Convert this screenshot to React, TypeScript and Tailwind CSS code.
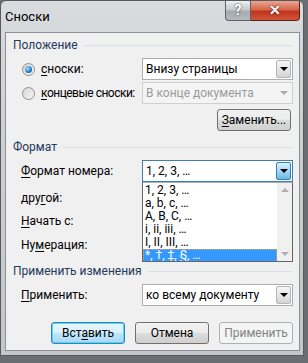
import React from 'react'

const font = { fontFamily: 'Roboto, "Noto Sans", sans-serif' }

function U({ children }: { children: React.ReactNode }) {
  return <span className="underline underline-offset-2">{children}</span>
}

function Arrow({ disabled, active }: { disabled?: boolean; active?: boolean }) {
  if (disabled) {
    return (
      <div className="flex h-full w-[16px] items-center justify-center">
        <div className="h-0 w-0 border-x-[4px] border-t-[4px] border-x-transparent border-t-[#a8a8a8]" />
      </div>
    )
  }
  return (
    <div
      className={
        'm-[1px] flex w-[15px] items-center justify-center rounded-[2px] border ' +
        (active
          ? 'border-[#3c7fb1] bg-[linear-gradient(#d9effb,#a4d7f4_50%,#6cb8e4)]'
          : 'border-[#b5b5b5] bg-[linear-gradient(#f6f6f6,#e6e6e6_50%,#d4d4d4)]')
      }
    >
      <div className="h-0 w-0 border-x-[4px] border-t-[4px] border-x-transparent border-t-black" />
    </div>
  )
}

function Select({ value, disabled, active }: { value: string; disabled?: boolean; active?: boolean }) {
  return (
    <div
      className={
        'flex h-[22px] w-[151px] border ' +
        (disabled
          ? 'border-[#cfcfcf] bg-[#f4f4f4] text-[#9a9a9a]'
          : active
            ? 'border-[#3c7fb1] bg-white text-black'
            : 'border-[#abadb3] bg-white text-black')
      }
    >
      <div className="flex flex-1 items-center whitespace-nowrap pl-[3px] text-[12px]">{value}</div>
      <Arrow disabled={disabled} active={active} />
    </div>
  )
}

function Radio({ checked }: { checked?: boolean }) {
  return (
    <div className="flex h-[13px] w-[13px] shrink-0 items-center justify-center rounded-full border border-[#8e8f8f] bg-[linear-gradient(135deg,#d4d4d4,#f8f8f8)]">
      {checked && <div className="h-[7px] w-[7px] rounded-full bg-[radial-gradient(circle_at_35%_35%,#a8e0ff,#1d7ac2_60%,#0c4a86)]" />}
    </div>
  )
}

function Header({ title, mt }: { title: string; mt: string }) {
  return (
    <div className={'flex h-[14px] items-center whitespace-nowrap pl-[7px] pr-[7px] text-[12px] text-[#1e395b] ' + mt}>
      <span>{title}</span>
      <div className="ml-[6px] h-px flex-1 bg-[#d5dfe5]" />
    </div>
  )
}

function Button({ label, variant }: { label: React.ReactNode; variant?: 'default' | 'disabled' }) {
  const cls =
    variant === 'disabled'
      ? 'border-[#adb2b5] bg-[#f4f4f4] text-[#838383]'
      : variant === 'default'
        ? 'border-[#3c7fb1] bg-[linear-gradient(#eaf6fd,#d9f0fc_50%,#bee6fd_51%,#a7d9f5)] text-black shadow-[inset_0_0_0_1px_#48d8fb]'
        : 'border-[#707070] bg-[linear-gradient(#f2f2f2,#ebebeb_50%,#dddddd_51%,#cfcfcf)] text-black'
  return (
    <div className={'flex h-[22px] w-[74px] items-center justify-center whitespace-nowrap rounded-[3px] border text-[12px] ' + cls}>
      {label}
    </div>
  )
}

const listItems = ['1, 2, 3, …', 'a, b, c, …', 'A, B, C, …', 'i, ii, iii, …', 'I, II, III, …', '*, †, ‡, §, …']

export default function App() {
  return (
    <div className="relative h-[363px] w-[308px] overflow-hidden bg-[#6a6e74]" style={font}>
      {/* window frame */}
      <div className="flex h-[356px] w-[304px] flex-col rounded-t-[6px] border border-[#555a60] bg-[linear-gradient(#d9dcdf,#cdd0d3_40%,#c4c7ca)]">
        {/* title bar */}
        <div className="flex h-[31px] items-start">
          <div className="pl-[4px] pt-[6px] text-[13px] text-black">Сноски</div>
          <div className="ml-auto mr-[3px] flex">
            <div className="flex h-[20px] w-[26px] items-center justify-center rounded-bl-[4px] border border-t-0 border-[#5d6268] bg-[linear-gradient(#eef0f2,#c6cacd_45%,#a4aaaf_55%,#b4babf)] text-[14px] font-bold text-white [text-shadow:0_0_2px_#222]">
              ?
            </div>
            <div className="flex h-[20px] w-[49px] items-center justify-center rounded-br-[4px] border border-l-0 border-t-0 border-[#5a2219] bg-[linear-gradient(#eba591,#d6674e_45%,#c0341c_55%,#d0563a)] text-[14px] font-bold text-white [text-shadow:0_0_2px_#300]">
              ✕
            </div>
          </div>
        </div>
        {/* client area */}
        <div className="relative ml-[4px] h-[319px] w-[295px] border border-[#8c9096] bg-[#f0f0f0] text-black">
          <Header title="Положение" mt="mt-[5px]" />
          <div className="mt-[6px] flex h-[22px] items-center">
            <div className="ml-[16px] flex w-[120px] items-center whitespace-nowrap text-[12px]">
              <Radio checked />
              <span className="ml-[6px]">
                <U>с</U>носки:
              </span>
            </div>
            <Select value="Внизу страницы" />
          </div>
          <div className="mt-[2px] flex h-[22px] items-center">
            <div className="ml-[16px] flex w-[120px] items-center whitespace-nowrap text-[12px] tracking-[-0.5px]">
              <Radio />
              <span className="ml-[6px]">
                <U>к</U>онцевые сноски:
              </span>
            </div>
            <Select value="В конце документа" disabled />
          </div>
          <div className="mt-[5px] flex justify-end pr-[8px]">
            <Button label={<span><U>З</U>аменить...</span>} />
          </div>

          <Header title="Формат" mt="mt-[9px]" />
          <div className="mt-[6px] flex h-[22px] items-center whitespace-nowrap text-[12px]">
            <div className="ml-[15px] w-[121px]">
              <U>Ф</U>ормат номера:
            </div>
            <Select value="1, 2, 3, …" active />
          </div>
          <div className="mt-[5px] flex h-[22px] items-center text-[12px]">
            <div className="ml-[15px] w-[121px]">
              дру<U>г</U>ой:
            </div>
          </div>
          <div className="mt-[1px] flex h-[22px] items-center text-[12px]">
            <div className="ml-[15px] w-[121px]">
              <U>Н</U>ачать с:
            </div>
          </div>
          <div className="mt-[2px] flex h-[22px] items-center text-[12px]">
            <div className="ml-[15px] w-[121px]">
              Ну<U>м</U>ерация:
            </div>
          </div>

          <Header title="Применить изменения" mt="mt-[8px]" />
          <div className="mt-[6px] flex h-[22px] items-center text-[12px]">
            <div className="ml-[15px] w-[121px]">
              <U>П</U>рименить:
            </div>
            <Select value="ко всему документу" />
          </div>

          <div className="mt-[16px] flex gap-[10px] pl-[45px]">
            <Button label={<span>Вст<U>а</U>вить</span>} variant="default" />
            <Button label="Отмена" />
            <Button label="Применить" variant="disabled" />
          </div>

          {/* open dropdown list */}
          <div className="absolute left-[136px] top-[149px] flex h-[80px] w-[151px] border border-[#646464] border-t-[#abadb3] bg-white">
            <div className="flex flex-1 flex-col overflow-hidden pt-[1px] text-[12px] leading-[13px]">
              {listItems.map((it, i) =>
                i === listItems.length - 1 ? (
                  <div key={it} className="h-[13px] whitespace-nowrap border border-dotted border-[#e8a040] bg-[#3399ff] pl-[1px] leading-[11px] text-white">
                    {it}
                  </div>
                ) : (
                  <div key={it} className="h-[13px] whitespace-nowrap pl-[2px]">
                    {it}
                  </div>
                )
              )}
            </div>
            <div className="flex w-[15px] flex-col items-center justify-between bg-[#f0f0f0] py-[5px]">
              <div className="h-0 w-0 border-x-[4px] border-b-[4px] border-x-transparent border-b-[#b0b0b0]" />
              <div className="h-0 w-0 border-x-[4px] border-t-[4px] border-x-transparent border-t-[#b0b0b0]" />
            </div>
          </div>
        </div>
      </div>
    </div>
  )
}
